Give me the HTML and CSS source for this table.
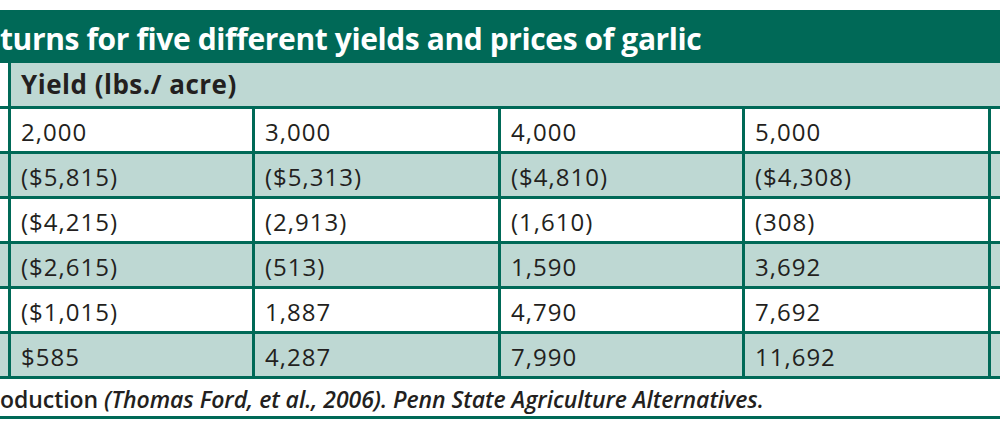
FILE: index.html
```html
<!DOCTYPE html>
<html>
<head>
<meta charset="utf-8">
<link rel="stylesheet" href="styles.css">
</head>
<body>
<div class="page">
  <div class="title">turns for five different yields and prices of garlic</div>
  <div class="grid">
    <div class="cell stub head"></div>
    <div class="cell head span">Yield (lbs./ acre)</div>

    <div class="cell stub"></div>
    <div class="cell">2,000</div><div class="cell">3,000</div><div class="cell">4,000</div><div class="cell">5,000</div><div class="cell"></div>

    <div class="cell stub alt"></div>
    <div class="cell alt">($5,815)</div><div class="cell alt">($5,313)</div><div class="cell alt">($4,810)</div><div class="cell alt">($4,308)</div><div class="cell alt"></div>

    <div class="cell stub"></div>
    <div class="cell">($4,215)</div><div class="cell">(2,913)</div><div class="cell">(1,610)</div><div class="cell">(308)</div><div class="cell"></div>

    <div class="cell stub alt"></div>
    <div class="cell alt">($2,615)</div><div class="cell alt">(513)</div><div class="cell alt">1,590</div><div class="cell alt">3,692</div><div class="cell alt"></div>

    <div class="cell stub"></div>
    <div class="cell">($1,015)</div><div class="cell">1,887</div><div class="cell">4,790</div><div class="cell">7,692</div><div class="cell"></div>

    <div class="cell stub alt"></div>
    <div class="cell alt">$585</div><div class="cell alt">4,287</div><div class="cell alt">7,990</div><div class="cell alt">11,692</div><div class="cell alt"></div>
  </div>
  <div class="source"><span class="src-bold">oduction</span> <em>(Thomas Ford, et al., 2006). Penn State Agriculture Alternatives.</em></div>
</div>
</body>
</html>
```

FILE: styles.css
```css
html, body {
  margin: 0;
  padding: 0;
  background: #ffffff;
}

.page {
  width: 1000px;
  height: 427px;
  overflow: hidden;
  padding-top: 10px;
  box-sizing: border-box;
  font-family: "Open Sans", "Noto Sans", sans-serif;
  color: #231f20;
}

.title {
  height: 53px;
  background: #006957;
  color: #ffffff;
  font-weight: 700;
  font-size: 30px;
  letter-spacing: -0.4px;
  line-height: 53px;
  white-space: nowrap;
  box-sizing: border-box;
  padding-top: 2px;
}

.grid {
  display: grid;
  grid-template-columns: 8px 241px 243px 241px 243px 1fr;
  grid-template-rows: 43px repeat(6, 42px);
  gap: 3px;
  background: #006957;
  padding-bottom: 3px;
}

.cell {
  background: #ffffff;
  font-size: 24px;
  letter-spacing: 1px;
  line-height: 42px;
  padding-left: 10px;
  padding-top: 2px;
  white-space: nowrap;
  box-sizing: border-box;
}

.cell.stub {
  padding: 0;
}

.cell.alt {
  background: #bed8d3;
}

.cell.head.span {
  grid-column: 2 / -1;
  background: #bed8d3;
  font-weight: 700;
  font-size: 26px;
  letter-spacing: 0.5px;
  line-height: 43px;
  padding-top: 0;
}

.source {
  height: 37px;
  border-bottom: 3px solid #006957;
  font-size: 23px;
  line-height: 40px;
  font-weight: 600;
  white-space: nowrap;
  letter-spacing: -0.05px;
}

.source em {
  font-style: italic;
}
```
